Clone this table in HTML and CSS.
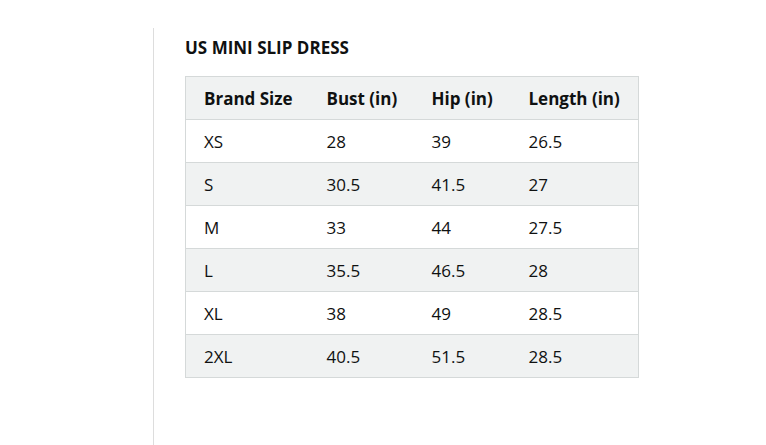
FILE: index.html
```html
<!DOCTYPE html>
<html>
<head>
<meta charset="utf-8">
<link rel="stylesheet" href="styles.css">
</head>
<body>
<div class="panel">
  <h2 class="title">US MINI SLIP DRESS</h2>
  <table class="sizes">
    <colgroup>
      <col class="c1"><col class="c2"><col class="c3"><col class="c4">
    </colgroup>
    <thead>
      <tr><th>Brand Size</th><th>Bust (in)</th><th>Hip (in)</th><th>Length (in)</th></tr>
    </thead>
    <tbody>
      <tr><td>XS</td><td>28</td><td>39</td><td>26.5</td></tr>
      <tr class="alt"><td>S</td><td>30.5</td><td>41.5</td><td>27</td></tr>
      <tr><td>M</td><td>33</td><td>44</td><td>27.5</td></tr>
      <tr class="alt"><td>L</td><td>35.5</td><td>46.5</td><td>28</td></tr>
      <tr><td>XL</td><td>38</td><td>49</td><td>28.5</td></tr>
      <tr class="alt"><td>2XL</td><td>40.5</td><td>51.5</td><td>28.5</td></tr>
    </tbody>
  </table>
</div>
</body>
</html>
```
FILE: styles.css
```css
html, body {
  margin: 0;
  padding: 0;
  background: #ffffff;
}
body {
  font-family: "Open Sans", "Noto Sans", sans-serif;
  color: #0f1111;
  height: 445px;
  overflow: hidden;
}
.panel {
  margin-left: 153px;
  margin-top: 28px;
  border-left: 1px solid #dddddd;
  padding-left: 31px;
  padding-top: 8px;
  height: 417px;
  box-sizing: border-box;
}
.title {
  margin: 0 0 17px 0;
  font-size: 17px;
  font-weight: 700;
  line-height: 23px;
}
.sizes {
  border-collapse: collapse;
  width: 453px;
  table-layout: fixed;
  font-size: 17px;
}
.c1 { width: 123px; }
.c2 { width: 105px; }
.c3 { width: 97px; }
.c4 { width: 128px; }
.sizes th, .sizes td {
  border-top: 1px solid #d5d9d9;
  border-bottom: 1px solid #d5d9d9;
  height: 43px;
  padding: 0 0 0 18px;
  text-align: left;
  white-space: nowrap;
  box-sizing: border-box;
}
.sizes th {
  font-weight: 700;
  background: #f0f2f2;
}
.sizes tr > :first-child { border-left: 1px solid #d5d9d9; }
.sizes tr > :last-child { border-right: 1px solid #d5d9d9; }
.sizes tr.alt td { background: #f0f2f2; }
```
